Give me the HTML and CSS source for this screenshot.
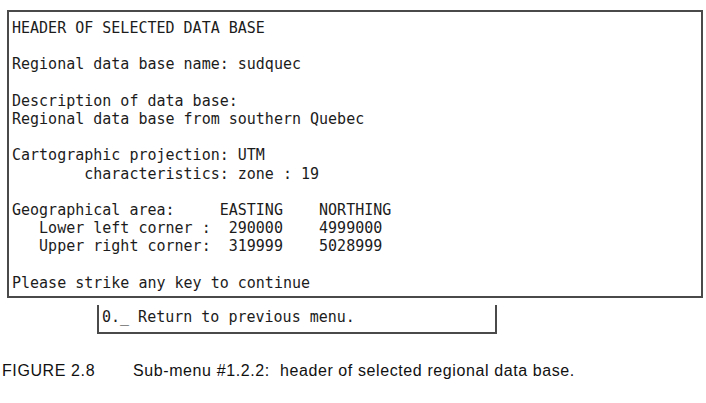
FILE: index.html
```html
<!DOCTYPE html>
<html lang="en">

<head>
  <meta charset="UTF-8">
  <meta name="viewport" content="width=device-width, initial-scale=1.0">
  <title>Figure 2.8 - Sub-menu #1.2.2</title>
  <link rel="stylesheet" href="styles.css">
</head>

<body>
  <div class="figure">
    <!-- terminal screen: header of the selected data base -->
    <pre class="screen">HEADER OF SELECTED DATA BASE

Regional data base name: sudquec

Description of data base:
Regional data base from southern Quebec

Cartographic projection: UTM
        characteristics: zone : 19

Geographical area:     EASTING    NORTHING
   Lower left corner :  290000    4999000
   Upper right corner:  319999    5028999

Please strike any key to continue</pre>

    <!-- bottom of the menu panel behind it -->
    <pre class="menu">0._ Return to previous menu.</pre>

    <div class="caption">
      <span class="caption-label">FIGURE 2.8</span>
      <span class="caption-text">Sub-menu #1.2.2:&nbsp; header of selected regional data base.</span>
    </div>
  </div>
</body>

</html>
```

FILE: styles.css
```css
:root {
  --ink: #1c1c1c;
  --rule: #4a4a4a;
  --paper: #ffffff;
}

* {
  margin: 0;
  padding: 0;
  box-sizing: border-box;
}

body {
  background: var(--paper);
  color: var(--ink);
}

.figure {
  padding: 10px 3px 0 7px;
}

.screen,
.menu {
  font-family: 'DejaVu Sans Mono', 'Liberation Mono', monospace;
  font-size: 15px;
  line-height: 18.2px;
  color: var(--ink);
  white-space: pre;
}

.screen {
  width: 696px;
  padding: 7px 4px 4px 3px;
  border: 2px solid var(--rule);
}

.menu {
  width: 400px;
  margin: 7px 0 0 90px;
  padding: 3px 4px 6px 3px;
  border: 2px solid var(--rule);
  border-top: none;
}

/* typeset caption under the figure, loosely tracked */
.caption {
  display: flex;
  margin: 27px 0 0 -5px;
  font-family: 'Liberation Sans', Arial, sans-serif;
  font-size: 16px;
  line-height: 19px;
  letter-spacing: 0.6px;
  color: #111;
}

.caption-label {
  width: 131px;
  flex-shrink: 0;
}
```
